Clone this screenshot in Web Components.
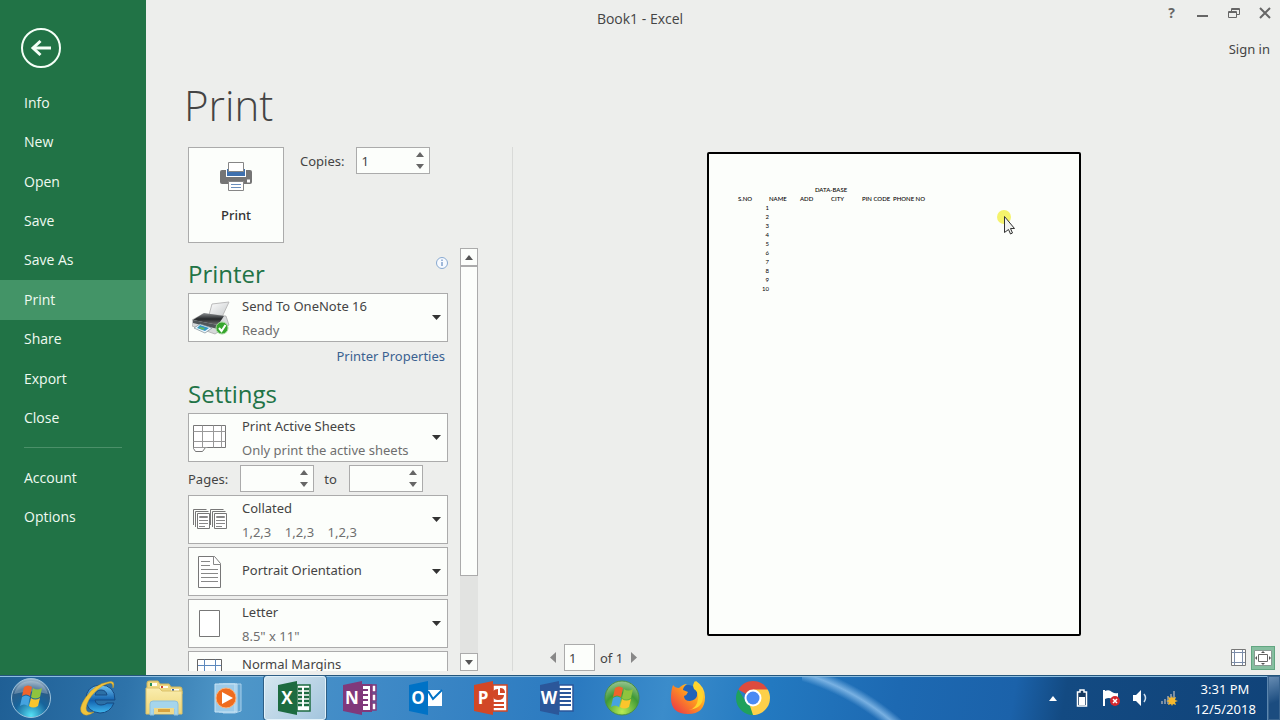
<!DOCTYPE html>
<html lang="en">
<head>
<meta charset="utf-8">
<meta name="viewport" content="width=device-width, initial-scale=1">
<title>Book1 - Excel</title>
<style>
  :root {
    --green: #217346;
    --paper: #fcfefb;
    --line: #ababab;
    --text: #444;
    --muted: #6f6f6f;
  }
  html, body { height: 100%; margin: 0; }
  body {
    background: #edeeec;
    color: var(--text);
    font: 13px/20px "Noto Sans", "Open Sans", sans-serif;
    overflow: hidden;
  }
</style>
</head>
<body>
<print-desktop></print-desktop>

<script>
// small helper: attach an open root and fill it
function render(el, html) {
  const template = document.createElement("template");
  template.innerHTML = html;
  el.attachShadow({ mode: "open" });
  el.shadowRoot.appendChild(template.content.cloneNode(true));
}

const triangle = {
  up: '<svg width="8" height="5" viewBox="0 0 8 5"><path d="M0 5 4 0l4 5z" fill="currentColor"/></svg>',
  down: '<svg width="8" height="5" viewBox="0 0 8 5"><path d="M0 0h8L4 5z" fill="currentColor"/></svg>',
  left: '<svg width="6" height="11" viewBox="0 0 6 11"><path d="M6 0v11L0 5.500z" fill="currentColor"/></svg>',
  right: '<svg width="6" height="11" viewBox="0 0 6 11"><path d="M0 0v11l6-5.500z" fill="currentColor"/></svg>',
};

class SideNav extends HTMLElement {
  constructor() {
    super();
    const item = (name) =>
      `<li><a href="#${name}"${name === "Print" ? ' aria-current="page"' : ""}>${name}</a></li>`;
    const main = ["Info", "New", "Open", "Save", "Save As", "Print", "Share", "Export", "Close"];
    render(this, `
<style>
  :host { display: block; background: var(--green); color: #fff; font: 14px/20px "Open Sans", "Noto Sans", sans-serif; }
  .back {
    display: block; margin: 27px 0 14px 20px; padding: 0;
    border: 0; background: none; color: #f4fff7; height: 42px;
  }
  ul { list-style: none; margin: 0; padding: 0; display: grid; grid-auto-rows: 1fr; }
  .main { min-height: 355px; }
  .more { min-height: 79px; }
  a {
    display: flex; align-items: center; height: 100%; padding-left: 24px;
    color: #effaf1; text-decoration: none;
  }
  a[aria-current] { background: #439467; }
  hr { border: 0; border-top: 1px solid #4b9069; margin: 9px 24px 10px; }
</style>
<button class="back" aria-label="Back">
  <svg width="42" height="42" viewBox="0 0 42 42" fill="none" stroke="currentColor">
    <circle cx="21" cy="21" r="19" stroke-width="2"/>
    <path d="M13 21h18" stroke-width="3"/>
    <path d="M20.500 14 13 21l7.500 7" stroke-width="3"/>
  </svg>
</button>
<nav>
  <ul class="main">${main.map(item).join("")}</ul>
  <hr>
  <ul class="more">${["Account", "Options"].map(item).join("")}</ul>
</nav>`);
  }
}
customElements.define("side-nav", SideNav);

class TitleBar extends HTMLElement {
  constructor() {
    super();
    render(this, `
<style>
  :host {
    display: grid; grid-template-columns: 1fr auto 1fr; height: 38px; align-items: center;
    font: 14px/20px "Open Sans", "Noto Sans", sans-serif;
  }
  .title { grid-column: 2; }
  .buttons { display: flex; justify-content: flex-end; align-self: start; }
  button {
    width: 31px; height: 25px; padding: 0; border: 0; background: none; color: #666;
    display: grid; place-items: center; font: bold 14px "Open Sans", sans-serif;
  }
  svg { fill: none; stroke: currentColor; }
</style>
<span class="title"><slot></slot></span>
<div class="buttons">
  <button aria-label="Help">?</button>
  <button aria-label="Minimize"><svg width="12" height="12"><path d="M0 9h11" stroke-width="2"/></svg></button>
  <button aria-label="Restore"><svg width="12" height="12"><path d="M.5 4.500h8v6h-8zM.5 5.500h8M3.500 4V1.500h8v6H9M3.500 2.500h8"/></svg></button>
  <button aria-label="Close"><svg width="12" height="12"><path d="m1 1 10 10M11 1 1 11" stroke-width="2"/></svg></button>
</div>`);
  }
}
customElements.define("title-bar", TitleBar);

// number box with its own up/down buttons
class SpinBox extends HTMLElement {
  constructor() {
    super();
    render(this, `
<style>
  :host { display: flex; align-items: center; gap: 12px; }
  .box {
    display: flex; box-sizing: border-box; width: 74px; height: 27px;
    border: 1px solid var(--line); background: var(--paper);
  }
  input {
    flex: 1; min-width: 0; border: 0; padding: 0 0 0 4px; background: none;
    font: inherit; color: inherit; appearance: textfield; outline: 0;
  }
  input::-webkit-inner-spin-button { appearance: none; margin: 0; }
  .steps { display: flex; flex-direction: column; width: 18px; }
  button { flex: 1; padding: 0; border: 0; background: none; color: #666; display: grid; place-items: center; }
</style>
<label for="value"></label>
<div class="box">
  <input id="value" type="number" min="1">
  <div class="steps">
    <button class="up" aria-label="Increase">${triangle.up}</button>
    <button class="down" aria-label="Decrease">${triangle.down}</button>
  </div>
</div>`);
    this.input = this.shadowRoot.querySelector("input");
    this.shadowRoot.querySelector("label").textContent = this.getAttribute("label");
    this.input.value = this.getAttribute("value") || "";
    this.shadowRoot.querySelector(".up").addEventListener("click", () => this.input.stepUp());
    this.shadowRoot.querySelector(".down").addEventListener("click", () => this.input.stepDown());
  }
}

// wide drop-down: icon, choice and an optional second line
class OptionPicker extends HTMLElement {
  constructor() {
    super();
    const note = this.getAttribute("note");
    render(this, `
<style>
  :host {
    display: grid; grid-template-columns: 53px 1fr 22px; align-items: center;
    box-sizing: border-box; height: 49px; border: 1px solid var(--line); background: var(--paper);
  }
  ::slotted(svg) { grid-area: 1 / 1; justify-self: start; margin-left: 3px; pointer-events: none; }
  select {
    grid-area: 1 / 1 / 2 / 4; width: 100%; height: 100%; appearance: none; border: 0; margin: 0;
    padding: 0 22px 4px 53px; background: none; font: inherit; color: inherit;
  }
  select.two { padding-bottom: 23px; }
  .note { grid-area: 1 / 2; align-self: end; margin-bottom: 1px; color: var(--muted); pointer-events: none; white-space: pre; }
  .arrow { grid-area: 1 / 3; justify-self: end; margin-right: 6px; color: #333; pointer-events: none; line-height: 0; }
</style>
<select class="${note ? "two" : ""}" aria-label="${this.getAttribute("name")}"><option>${this.getAttribute("choice")}</option></select>
<slot></slot>
<span class="note"></span>
<span class="arrow"><svg width="9" height="5" viewBox="0 0 9 5"><path d="M0 0h9L4.500 5z" fill="currentColor"/></svg></span>`);
    this.shadowRoot.querySelector(".note").textContent = note || "";
  }
}

class ScrollBar extends HTMLElement {
  constructor() {
    super();
    render(this, `
<style>
  :host { display: flex; flex-direction: column; width: 18px; background: #e2e3e1; }
  button, .thumb { box-sizing: border-box; border: 1px solid var(--line); background: var(--paper); }
  button { height: 18px; padding: 0; display: grid; place-items: center; color: #555; }
  .track { flex: 1; }
  .thumb { height: 80%; }
</style>
<button aria-label="Scroll up">${triangle.up}</button>
<div class="track"><div class="thumb"></div></div>
<button aria-label="Scroll down">${triangle.down}</button>`);
  }
}
customElements.define("scroll-bar", ScrollBar);

const icons = {
  print: `<svg width="34" height="30" viewBox="0 0 34 30">
    <path d="M3 9h28q2 0 2 2v10q0 2-2 2H3q-2 0-2-2V11q0-2 2-2z" fill="#757575"/>
    <path d="M7 9h20v7H7z" fill="#fff"/><path d="M8 8h18v7H8z" fill="#3e70ae"/>
    <path d="M9.500 1.500h15v9h-15z" fill="#fff" stroke="#868686"/>
    <path d="M9.500 20.500h15v9h-15z" fill="#fff" stroke="#868686"/>
    <path d="M12 23.500h10M12 26.500h10" stroke="#6b8fbd"/>
    <path d="M28 18.500h3v3h-3z" fill="#fff"/></svg>`,
  device: `<svg width="38" height="36" viewBox="0 0 38 36">
    <defs>
      <linearGradient id="body" x1="0" y1="0" x2="0" y2="1"><stop offset="0" stop-color="#8a8e90"/><stop offset=".5" stop-color="#25282a"/><stop offset="1" stop-color="#777"/></linearGradient>
      <linearGradient id="sheet" x1="0" y1="0" x2="1" y2="1"><stop offset="0" stop-color="#fff"/><stop offset="1" stop-color="#c5c9ca"/></linearGradient>
    </defs>
    <path d="m20 4 17-2-7 15-13-2z" fill="url(#sheet)" stroke="#bbb"/>
    <path d="m11 14 23 2 3 9-14 9-23-8v-6z" fill="#d6d9da" stroke="#999" stroke-width=".6"/>
    <path d="m12 13 20 3-6 9-25-5z" fill="url(#body)"/>
    <path d="m1 20 25 5v4L1 23z" fill="#51575a"/>
    <path d="m8 24 12 4-7 5-11-5z" fill="#eef8ff" stroke="#798991" stroke-width=".7"/>
    <path d="m8 25 9 3-4 3-8-3z" fill="#3296c4"/><path d="m8 27 5 1-2 2-4-2z" fill="#62b75f"/>
    <circle cx="30" cy="28" r="6" fill="#36a62d" stroke="#a4d89c"/>
    <path d="m27 28 2.500 3 4-6" fill="none" stroke="#fff" stroke-width="2"/></svg>`,
  sheets: `<svg width="36" height="30" viewBox="0 0 36 30" fill="none" stroke="#777">
    <path d="M1.500 2.500h32v22h-20l-3 4h-7l-2-3z" fill="#fff"/><path d="M1.500 24.500h14M1.500 8.500h32M1.500 18.500h32M10.500 2.500v22M21.500 2.500v22M29.500 2.500v22" stroke="#999"/></svg>`,
  collated: `<svg width="38" height="24" viewBox="0 0 38 24" fill="none" stroke="#777">
    ${[0, 17].map((x) => `<g transform="translate(${x})"><path d="M1.500 17V1.500h13M3.500 19V3.500h13"/><path d="M5.500 5.500h12v15h-12z" fill="#fff"/><path d="M7.500 8.500h8v1h-8zM7 12.500h9M7 15.500h9M7 18.500h6" stroke="#888"/></g>`).join("")}</svg>`,
  portrait: `<svg width="34" height="34" viewBox="0 0 34 34" fill="#fff" stroke="#777">
    <path d="M6.500 1.500h16l6 7v24h-22z"/><path d="M21.500 1.500v8h7M9 6.500h9M9 10.500h9M9 14.500h17M9 18.500h17M9 22.500h17M9 26.500h17" stroke="#888"/></svg>`,
  letter: `<svg width="34" height="30" viewBox="0 0 34 30"><path d="M7.500 1.500h20v26h-20z" fill="#fff" stroke="#777"/></svg>`,
  margins: `<svg width="34" height="34" viewBox="0 0 34 34" fill="none"><path d="M5.500.500h24v33h-24z" fill="#fff" stroke="#666"/><path d="M12.500.500v33M23.500.500v33M6 6.500h23M6 27.500h23" stroke="#5d88bd"/></svg>`,
};

class PrintSettings extends HTMLElement {
  constructor() {
    super();
    render(this, `
<style>
  :host { display: flex; flex-direction: column; min-height: 0; gap: 5px; padding: 0 34px 0 42px; border-right: 1px solid #d9dad8; }
  .top { display: flex; gap: 16px; align-items: flex-start; }
  .print {
    box-sizing: border-box; width: 96px; height: 96px; border: 1px solid var(--line); background: var(--paper);
    display: flex; flex-direction: column; align-items: center; gap: 14px; padding: 13px 0 0;
    font: inherit; font-weight: 500; color: #333;
  }
  .scroll { flex: 1; min-height: 0; display: flex; gap: 12px; }
  .list { width: 260px; overflow: hidden; }
  h2 { margin: 0; height: 43px; font: 24px/47px "Open Sans", "Noto Sans", sans-serif; color: var(--green); }
  .head { display: flex; justify-content: space-between; align-items: flex-start; height: 45px; }
  .head h2 { line-height: 52px; }
  .info { border: 0; padding: 0; background: none; margin-top: 9px; line-height: 0; }
  .props { display: block; text-align: right; line-height: 28px; padding-right: 3px; color: #3a6190; text-decoration: none; }
  .stack { display: flex; flex-direction: column; gap: 3px; }
  .stack option-picker, .stack .pages { flex: none; }
  .pages { display: flex; gap: 10px; }
</style>
<div class="top">
  <button class="print">${icons.print}Print</button>
  <spin-box label="Copies:" value="1"></spin-box>
</div>
<div class="scroll">
  <div class="list">
    <div class="head">
      <h2>Printer</h2>
      <button class="info" aria-label="Printer status"><svg width="12" height="12" viewBox="0 0 12 12"><circle cx="6" cy="6" r="5.500" fill="#f7faff" stroke="#88a9d0"/><path d="M6 5v4M6 2.500v1.500" stroke="#4a78b4"/></svg></button>
    </div>
    <option-picker name="Printer" choice="Send To OneNote 16" note="Ready">${icons.device}</option-picker>
    <a class="props" href="#properties">Printer Properties</a>
    <h2>Settings</h2>
    <div class="stack">
      <option-picker name="Print what" choice="Print Active Sheets" note="Only print the active sheets">${icons.sheets}</option-picker>
      <div class="pages"><spin-box label="Pages:"></spin-box><spin-box label="to"></spin-box></div>
      <option-picker name="Collation" choice="Collated" note="1,2,3    1,2,3    1,2,3">${icons.collated}</option-picker>
      <option-picker name="Orientation" choice="Portrait Orientation">${icons.portrait}</option-picker>
      <option-picker name="Paper size" choice="Letter" note="8.5&quot; x 11&quot;">${icons.letter}</option-picker>
      <option-picker name="Margins" choice="Normal Margins" note=" ">${icons.margins}</option-picker>
    </div>
  </div>
  <scroll-bar></scroll-bar>
</div>`);
  }
}
// children read their attributes in the constructor, so the parent goes in first
customElements.define("print-settings", PrintSettings);
customElements.define("spin-box", SpinBox);
customElements.define("option-picker", OptionPicker);

class PrintPreview extends HTMLElement {
  constructor() {
    super();
    const heads = ["S.NO", "NAME", "ADD", "CITY", "PIN CODE", "PHONE NO"];
    let rows = "";
    for (let i = 1; i <= 10; i++) {
      rows += `<tr><td>${i}</td>${"<td></td>".repeat(5)}</tr>`;
    }
    render(this, `
<style>
  :host { display: flex; flex-direction: column; gap: 8px; min-width: 0; min-height: 0; padding: 5px 5px 0 34px; }
  .area { flex: 1; min-height: 0; display: flex; justify-content: center; margin-left: -34px; }
  .sheet {
    box-sizing: border-box; height: 100%; aspect-ratio: 374 / 484; border: 2px solid #000; border-radius: 2px;
    background: var(--paper); padding: 31px 29px;
  }
  table { border-collapse: collapse; table-layout: fixed; width: 186px; color: #000; font: 6px/9px Lato, sans-serif; }
  th, td { padding: 0; height: 9px; font-weight: 400; text-align: left; white-space: nowrap; }
  thead th { font-weight: 500; }
  thead .name { text-align: center; }
  td:first-child { text-align: right; }
  .bar { display: flex; justify-content: space-between; align-items: center; height: 27px; }
  .pager { display: flex; align-items: center; gap: 5px; }
  button { border: 0; padding: 0; background: none; color: #888; line-height: 0; }
  .pager button { width: 12px; height: 20px; }
  input {
    box-sizing: border-box; width: 31px; height: 27px; border: 1px solid var(--line); padding: 0 4px;
    background: var(--paper); font: inherit; color: inherit;
  }
  .zoom { display: flex; align-items: center; }
  .zoom button { width: 24px; height: 24px; display: grid; place-items: center; }
  .zoom .on { background: #86bfa0; outline: 1px solid #62a681; outline-offset: -1px; }
</style>
<div class="area">
  <div class="sheet">
    <table>
      <thead>
        <tr><th class="name" colspan="6">DATA-BASE</th></tr>
        <tr>${heads.map((h) => `<th>${h}</th>`).join("")}</tr>
      </thead>
      <tbody>${rows}</tbody>
    </table>
  </div>
</div>
<div class="bar">
  <div class="pager">
    <button aria-label="Previous page">${triangle.left}</button>
    <input id="page" value="1" aria-label="Current page">
    <label for="page">of 1</label>
    <button aria-label="Next page">${triangle.right}</button>
  </div>
  <div class="zoom">
    <button aria-label="Show margins"><svg width="16" height="17" viewBox="0 0 16 17" fill="none"><path d="M.5.500h14v16H.5z" fill="#fff" stroke="#777"/><path d="M3.500 1v15M11.500 1v15M1 3.500h13M1 13.500h13" stroke="#7b8ca8"/></svg></button>
    <button class="on" aria-label="Zoom to page"><svg width="18" height="16" viewBox="0 0 18 16"><path d="M.5.500h17v15H.5z" fill="#fff" stroke="#8a9a94"/><path d="M4.500 4.500h9v7h-9z" fill="#fff" stroke="#666"/><path d="M7 3h4L9 1zM7 13h4l-2 2zM3 6v4L1 8zM15 6v4l2-2z" fill="#555"/></svg></button>
  </div>
</div>`);
  }
}
customElements.define("print-preview", PrintPreview);

// Office tile: coloured door with a letter, page art behind it
const office = (color, letter, art) => `
<svg width="36" height="36" viewBox="0 0 36 36">
  ${art}
  <path d="M1 5 20 1v34L1 31z" fill="${color}"/>
  <text x="10" y="24" text-anchor="middle" fill="#fff" font-family="Open Sans, sans-serif" font-weight="700" font-size="17">${letter}</text>
</svg>`;

const windowsFlag = (x, y) => `<g transform="translate(${x} ${y})">
  <path d="M4 1q4-3 8 0l-2 9q-4-3-8 0z" fill="#f0642c"/>
  <path d="M13 2q4 3 9 0l-2 9q-5 3-9 0z" fill="#8fc43e"/>
  <path d="M2 11q4-3 8 0l-2 9q-4-3-8 0z" fill="#45a3e0"/>
  <path d="M11 12q4 3 9 0l-2 8q-5 3-9 0z" fill="#fbc52c"/></g>`;

const apps = [
  ["Internet Explorer", `<svg width="38" height="38" viewBox="0 0 38 38">
    <defs><linearGradient id="ie" x1="0" y1="0" x2="0" y2="1"><stop offset="0" stop-color="#6fc4f4"/><stop offset=".55" stop-color="#1260ad"/><stop offset="1" stop-color="#3fb8ef"/></linearGradient></defs>
    <path d="M36 21H16q1 5 6 5 4 0 6-2h7q-4 10-14 10Q7 33 7 20T21 6q15 0 15 15zM16 16h12q-1-5-6-5t-6 5z" fill="url(#ie)" stroke="#174b82"/>
    <path d="M34 9q3-8-5-6Q16 5 7 18T4 35q4 3 11-2-8 2-8-4 1-8 9-16T31 4q3 0 3 5z" fill="#f0c43c" stroke="#c99b28" stroke-width=".5"/></svg>`],
  ["Explorer", `<svg width="40" height="38" viewBox="0 0 40 38">
    <defs><linearGradient id="fo" x1="0" y1="0" x2="0" y2="1"><stop offset="0" stop-color="#faedae"/><stop offset="1" stop-color="#eed576"/></linearGradient></defs>
    <path d="M3 14V4q0-2 2-2h9l2 3h9l2 3h9q2 0 2 2v5z" fill="#edd781" stroke="#d0b65c"/>
    <path d="M6 4h7v3H6zM16 7h8v2h-8zM27 10h8v2h-8z" fill="#fffdf0"/>
    <path d="M6 4h2v3H6z" fill="#279057"/><path d="M17 7h2v2h-2z" fill="#d04632"/><path d="M28 10h2v2h-2z" fill="#355fa8"/>
    <path d="M2 9h13l3 3h20v23H2z" fill="url(#fo)" stroke="#dcc26b"/>
    <path d="M6 36V25q0-3 3-3h22q3 0 3 3v11h-4v-6H10v6z" fill="#a5d5ec" stroke="#8fc0da"/>
    <path d="M10 29h20v6H10z" fill="#efd98a"/><path d="M14 30h12v3H14z" fill="#d9a33f"/></svg>`],
  ["Media Player", `<svg width="32" height="34" viewBox="0 0 32 34">
    <path d="M10 3h18v27l-6 2H10z" fill="#6aaad5" stroke="#a8cfea"/><path d="M6 3h18v28H6z" fill="#95c6e7" stroke="#c3e0f2"/><path d="M2 3h20v28H2z" fill="#9ccbe9" stroke="#c9e4f5"/>
    <circle cx="13" cy="17" r="10" fill="#ef6c1f" stroke="#fbb37c"/><path d="m9 11 11 6-11 6z" fill="#fff"/></svg>`],
  ["Excel", office("#1d6b40", "X", `<path d="M20 5h13v26H20z" fill="#fff" stroke="#1d6b40" stroke-width="1.500"/>
    <path d="M21 9h4M27 9h5M21 13h4M27 13h5M21 17h4M27 17h5M21 21h4M27 21h5M21 25h4M27 25h5" stroke="#1d6b40" stroke-width="2.500"/>`)],
  ["OneNote", office("#80397b", "N", `<path d="M20 5h9v26h-9z" fill="#fff" stroke="#80397b" stroke-width="2"/>
    <path d="M30 5h4v7h-4zM30 14h4v7h-4zM30 23h4v7h-4z" fill="#fff" stroke="#80397b" stroke-width="1.500"/>
    <path d="M20 10h6M20 15h6M20 20h6M20 25h6" stroke="#80397b" stroke-width="2"/>`)],
  ["Outlook", office("#0072c6", "O", `<path d="M20 10h14v16H20z" fill="#fff"/><path d="m20 11 5 8 9-9" fill="none" stroke="#0072c6" stroke-width="2"/>`)],
  ["PowerPoint", office("#d24726", "P", `<path d="M20 5h14v26H20z" fill="#fff" stroke="#d24726" stroke-width="1.500"/>
    <path d="M25 9v6h6q0 5-6 5-4 0-5-3v-6q2-2 5-2z" fill="#d24726"/><path d="M27 8q5 0 5 5h-5z" fill="#d24726"/><path d="M20 23h11M20 27h11" stroke="#d24726" stroke-width="2"/>`)],
  ["Word", office("#2b579a", "W", `<path d="M20 5h14v26H20z" fill="#fff" stroke="#2b579a" stroke-width="1.500"/>
    <path d="M20 9h12M20 13h12M20 17h12M20 21h12M20 25h12" stroke="#2b579a" stroke-width="2"/>`)],
  ["Media Center", `<svg width="36" height="36" viewBox="0 0 36 36">
    <defs><radialGradient id="mc" cx=".5" cy=".9" r=".9"><stop offset="0" stop-color="#b9ec55"/><stop offset=".6" stop-color="#3f9a35"/><stop offset="1" stop-color="#9ac593"/></radialGradient></defs>
    <circle cx="18" cy="18" r="17" fill="url(#mc)" stroke="#4a8f43"/>${windowsFlag(7, 7)}</svg>`],
  ["Firefox", `<svg width="36" height="36" viewBox="0 0 36 36">
    <defs><linearGradient id="ff" x1="1" y1="0" x2="0" y2="1"><stop offset="0" stop-color="#fff04a"/><stop offset=".45" stop-color="#ff9a1f"/><stop offset="1" stop-color="#ea2a4c"/></linearGradient></defs>
    <circle cx="18" cy="17" r="12" fill="#2163b8"/>
    <path d="M3 5q2 3 6 3 4-4 8-4-4 3-4 6l5 2q-1 3-4 4 0 5 6 5 6-1 7-5 1-7-4-10 1-3 3-5 9 6 9 16 0 17-17 17Q1 34 1 18 1 10 3 5z" fill="url(#ff)"/>
    <path d="M25 1q-3 4-1 8 5 3 4 10-1 9-9 11 15-2 14-15-1-6-8-14z" fill="#ffd52c"/></svg>`],
  ["Chrome", `<svg width="36" height="36" viewBox="0 0 36 36">
    <path d="M18 18 3.300 9.500A17 17 0 0 1 32.700 9.500z" fill="#dd4b3e"/>
    <path d="M18 18V9.500h14.700A17 17 0 0 1 18 35z" fill="#fdd04a"/>
    <path d="M18 18v17A17 17 0 0 1 3.300 9.500L11 22z" fill="#1fa15d"/>
    <path d="m25.400 22.200-7.400 12.800L15 26z" fill="#fdd04a"/>
    <circle cx="18" cy="18" r="8.500" fill="#fff"/><circle cx="18" cy="18" r="6.500" fill="#4a8af4"/></svg>`],
];

class TaskBar extends HTMLElement {
  constructor() {
    super();
    render(this, `
<style>
  /* first layer is the bright arc of the glass, the second the blue itself */
  :host {
    display: flex; align-items: stretch; height: 45px; box-sizing: border-box;
    border-top: 1px solid #24567c; box-shadow: inset 0 1px #8cbde0; color: #fff;
    background:
      radial-gradient(circle at -70px 235px, transparent 240px, #8dc0ecd0 248px, transparent 256px) 71% 0 / 150px 45px no-repeat,
      linear-gradient(100deg, #1f5f95 0, #2e73aa 10%, #4f97c8 18%, #418bc7 28%, #2b7ac0 45%, #3b8ccb 52%, #2379c0 60%, #1d69b2 70%, #1b62aa 79%, #134a82 83%, #104379 100%);
  }
  button { border: 0; padding: 0; background: none; display: grid; place-items: center; line-height: 0; }
  .start { width: 62px; }
  .apps { display: flex; flex: 0 1 717px; justify-content: space-between; margin-left: 5px; }
  .apps button { width: 62px; border: 1px solid transparent; border-radius: 3px; }
  .apps .active { background: linear-gradient(135deg, #d5e6ef, #a3c5de); border-color: #e2f2fa; box-shadow: 0 0 0 1px #2e5f86; }
  .tray { display: flex; align-items: center; margin-left: auto; }
  .tray button { width: 29px; height: 30px; }
  time { width: 84px; text-align: center; line-height: 20px; padding-top: 1px; }
  .desktop { width: 13px; border-left: 1px solid #5d88b0; background: linear-gradient(160deg, #6a8fb5, #1b4c7f 60%); box-shadow: inset 0 0 0 1px #39648f; }
</style>
<button class="start" aria-label="Start"><svg width="42" height="42" viewBox="0 0 42 42">
  <defs><radialGradient id="orb" cx=".5" cy=".95" r=".95"><stop offset="0" stop-color="#55e2f6"/><stop offset=".45" stop-color="#17649c"/><stop offset=".75" stop-color="#2b5b86"/><stop offset="1" stop-color="#a9c0d2"/></radialGradient></defs>
  <circle cx="21" cy="21" r="19.500" fill="url(#orb)" stroke="#9dc3dd"/>
  <path d="M4 17Q8 4 21 4t17 13Q21 12 4 17z" fill="#fff" opacity=".25"/>${windowsFlag(10, 9)}</svg></button>
<div class="apps">
  ${apps.map(([name, svg]) => `<button class="${name === "Excel" ? "active" : ""}" aria-label="${name}">${svg}</button>`).join("")}
</div>
<div class="tray">
  <button aria-label="Show hidden icons"><svg width="8" height="5"><path d="m0 5 4-5 4 5z" fill="#fff"/></svg></button>
  <button aria-label="Battery"><svg width="12" height="18" viewBox="0 0 12 18"><path d="M4 1h4v2h2.500v14h-9V3H4z" fill="#16395f" stroke="#fff" stroke-width="1.500"/><path d="M3 8h6v8H3z" fill="#fff"/></svg></button>
  <button aria-label="Action Center"><svg width="18" height="18" viewBox="0 0 18 18"><path d="M2 1v16" stroke="#fff" stroke-width="2"/><path d="M3 2q4-2 7 1 3 2 6 1v7q-3 1-6-1-3-2-7 0z" fill="#fff"/><circle cx="13" cy="12" r="5" fill="#d5282e"/><path d="m11 10 4 4m0-4-4 4" stroke="#fff" stroke-width="1.500"/></svg></button>
  <button aria-label="Volume"><svg width="16" height="18" viewBox="0 0 16 18"><path d="M1 6h3l5-5v16l-5-5H1z" fill="#fff"/><path d="M12 5q3 4 0 8" fill="none" stroke="#cbdcec" stroke-width="1.500"/></svg></button>
  <button aria-label="Network"><svg width="18" height="16" viewBox="0 0 18 16"><path d="M2 14v-3M5 14V9M8 14V6M11 14V4M14 14V1" stroke="#7c8ea2" stroke-width="2"/><path d="m12 6 1 2 3-1-1 3 3 1-3 1 1 3-3-1-1 2-1-2-3 1 1-3-3-1 3-1-1-3 3 1z" fill="#f7b92e"/></svg></button>
  <time datetime="2018-12-05T15:31">3:31 PM<br>12/5/2018</time>
</div>
<button class="desktop" aria-label="Show desktop"></button>`);
  }
}
customElements.define("task-bar", TaskBar);

class MousePointer extends HTMLElement {
  constructor() {
    super();
    render(this, `
<style>:host { position: absolute; left: 995px; top: 208px; pointer-events: none; line-height: 0; }</style>
<svg width="22" height="28" viewBox="0 0 22 28"><circle cx="9" cy="9" r="7" fill="#f5f36b"/>
<path d="M9.500 8.500v16l4-3 2 4.500 2-1-2-4.500h4z" fill="#f1f3f0" stroke="#333"/></svg>`);
  }
}
customElements.define("mouse-pointer", MousePointer);

class PrintDesktop extends HTMLElement {
  constructor() {
    super();
    render(this, `
<style>
  :host { display: flex; flex-direction: column; height: 100vh; }
  .backstage {
    flex: 1; min-height: 0; display: grid;
    grid-template: "nav bar" auto "nav account" auto "nav title" auto "nav body" minmax(0, 1fr) / 146px minmax(0, 1fr);
  }
  side-nav { grid-area: nav; }
  /* the bar runs over the nav so that the title centres on the window */
  title-bar { grid-row: 1; grid-column: 1 / -1; pointer-events: none; }
  .account { grid-area: account; text-align: right; padding-right: 10px; line-height: 22px; }
  .account a { color: inherit; text-decoration: none; }
  h1 {
    grid-area: title; margin: 3px 0 0 38px; color: #444;
    font: 300 42px/84px "Open Sans", "Noto Sans", sans-serif;
  }
  main { grid-area: body; display: grid; grid-template-columns: auto minmax(0, 1fr); padding-bottom: 4px; }
</style>
<div class="backstage">
  <side-nav></side-nav>
  <title-bar>Book1 - Excel</title-bar>
  <div class="account"><a href="#signin">Sign in</a></div>
  <h1>Print</h1>
  <main>
    <print-settings></print-settings>
    <print-preview></print-preview>
  </main>
</div>
<task-bar></task-bar>
<mouse-pointer></mouse-pointer>`);
  }
}
customElements.define("print-desktop", PrintDesktop);
</script>
</body>
</html>
